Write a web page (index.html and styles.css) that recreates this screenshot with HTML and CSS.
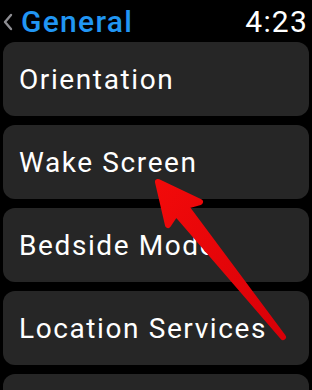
FILE: index.html
```html
<!DOCTYPE html>
<html lang="en">
  <head>
    <meta charset="UTF-8" />
    <meta name="viewport" content="width=device-width, initial-scale=1.0" />
    <title>General</title>
    <link rel="stylesheet" href="styles.css">
  </head>
  <body>
    <div class="screen">
      <header class="top-bar">
        <div class="back">
          <svg class="chevron" width="10" height="18" viewBox="0 0 10 18">
            <polyline points="8,2 2,9 8,16" fill="none" stroke="#8e8e93" stroke-width="2.4" stroke-linecap="round" stroke-linejoin="round" />
          </svg>
          <span class="back-title">General</span>
        </div>
        <span class="clock">4:23</span>
      </header>

      <ul class="menu">
        <li class="menu-item">Orientation</li>
        <li class="menu-item">Wake Screen</li>
        <li class="menu-item">Bedside Mode</li>
        <li class="menu-item">Location Services</li>
        <li class="menu-item"></li>
      </ul>

      <!-- flèche rouge par-dessus la liste -->
      <svg class="pointer" width="312" height="390" viewBox="0 0 312 390">
        <defs>
          <linearGradient id="red" x1="0" y1="0" x2="1" y2="1">
            <stop offset="0" stop-color="#f20a0a" />
            <stop offset="1" stop-color="#d80008" />
          </linearGradient>
        </defs>
        <polygon
          points="158,182 200,202 185.5,206 283,337 176,213 168,225"
          fill="url(#red)"
          stroke="url(#red)"
          stroke-width="6"
          stroke-linejoin="round"
        />
      </svg>
    </div>
  </body>
</html>
```

FILE: styles.css
```css
html,
body {
  margin: 0;
  padding: 0;
  background-color: #000;
  color: #fff;
  font-family: Roboto, "Liberation Sans", sans-serif;
}

.screen {
  position: relative;
  width: 312px;
  height: 390px;
  overflow: hidden;
}

/* Barre du haut */
.top-bar {
  display: flex;
  align-items: center;
  justify-content: space-between;
  height: 42px;
  padding: 0 4px 0 3px;
  box-sizing: border-box;
}

.back {
  display: flex;
  align-items: center;
  gap: 8px;
}

.chevron {
  display: block;
  margin-top: 1px;
}

.back-title {
  color: #2196f3;
  font-size: 30px;
  font-weight: 500;
  letter-spacing: 1.3px;
}

.clock {
  font-size: 30px;
  letter-spacing: 1.2px;
}

/* Liste */
.menu {
  list-style: none;
  margin: 0;
  padding: 0 3px;
  display: flex;
  flex-direction: column;
  gap: 9px;
}

.menu-item {
  height: 74px;
  display: flex;
  align-items: center;
  padding: 0 16px;
  background-color: #262626;
  border-radius: 12px;
  font-size: 28px;
  letter-spacing: 1.6px;
  flex-shrink: 0;
}

.pointer {
  position: absolute;
  left: 0;
  top: 0;
}
```
